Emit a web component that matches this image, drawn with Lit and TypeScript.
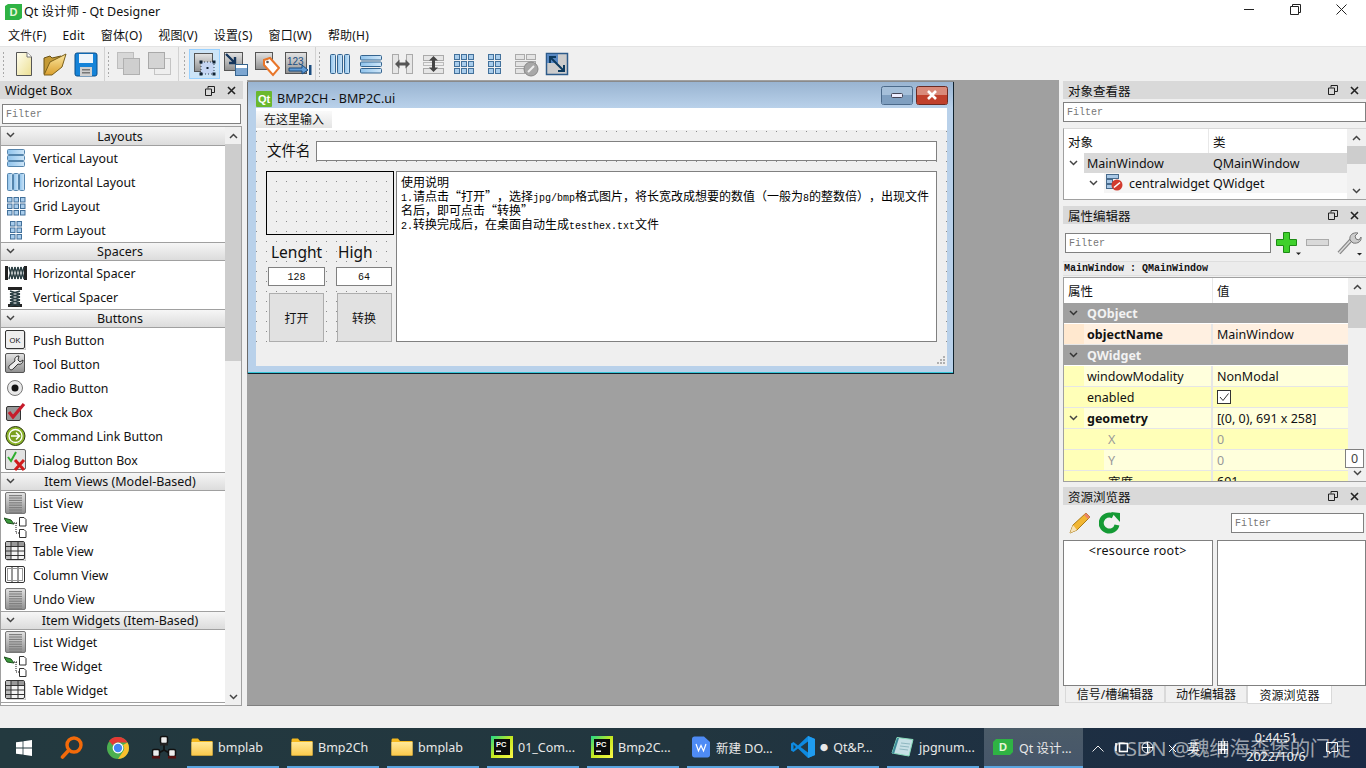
import { LitElement, html, css, svg } from "lit";
import { customElement } from "lit/decorators.js";

const bevel = (x: number, y: number, w: number, h: number, fill = "url(#gBevel)", stroke = "#666") =>
  svg`<rect x=${x + 0.5} y=${y + 0.5} width=${w - 1} height=${h - 1} rx="1.5" fill=${fill} stroke=${stroke}/>`;
const ic = (w: number, h: number, body: unknown) =>
  html`<svg width=${w} height=${h} viewBox="0 0 ${w} ${h}">${body}</svg>`;

const gridCells = (cols: number, rows: number, x0: number, y0: number, p: number, s: number) => {
  const out: unknown[] = [];
  for (let c = 0; c < cols; c++)
    for (let r = 0; r < rows; r++)
      out.push(svg`<rect x=${x0 + c * p + 0.5} y=${y0 + r * p + 0.5} width=${s} height=${s} fill="#a9cdec" stroke="#43719b"/>`);
  return out;
};
const spring = (vertical: boolean) => {
  const parts: unknown[] = [];
  for (let i = 0; i < 5; i++)
    parts.push(
      vertical
        ? svg`<path d="M5 ${5 + i * 3}L15 ${8 + i * 3}M15 ${5 + i * 3}L5 ${8 + i * 3}" stroke="#2b3f44" stroke-width="1.4"/>`
        : svg`<path d="M${4 + i * 3} 5L${7 + i * 3} 17M${7 + i * 3} 5L${4 + i * 3} 17" stroke="#2b3f44" stroke-width="1.4"/>`
    );
  return ic(
    22,
    22,
    vertical
      ? svg`<rect x="3" y="1" width="14" height="3" fill="#222"/><rect x="3" y="18" width="14" height="3" fill="#222"/>${parts}`
      : svg`<rect x="0" y="4" width="3" height="14" fill="#222"/><rect x="19" y="4" width="3" height="14" fill="#222"/>${parts}`
  );
};
const lines = () => {
  const l: unknown[] = [];
  for (let i = 0; i < 8; i++) l.push(svg`<rect x="4" y=${3 + i * 2.4} width="13" height="1.2" fill="#808080"/>`);
  return ic(21, 22, svg`${bevel(0, 0, 21, 22, "url(#gBevel)", "#777")}${l}`);
};
const tree = () =>
  ic(23, 22, svg`<path d="M0 2L7 4L10 8L3 7Z" fill="#3b9a3b" stroke="#1f4f1f"/>
    <path d="M10 7H14M12 7V17H15" stroke="#111" stroke-dasharray="1 1" fill="none"/>
    <path d="M15.5 1.5H20L22 3.5V10H15.5Z" fill="#fff" stroke="#333"/><path d="M15.5 13.5H20L22 15.5V21.5H15.5Z" fill="#fff" stroke="#333"/>`);
const table = () =>
  ic(21, 20, svg`<rect x=".5" y=".5" width="19" height="18" rx="1.5" fill="#f4f4f4" stroke="#333"/><rect x="1" y="1" width="18" height="4" fill="#999"/><rect x="1" y="1" width="5" height="17" fill="#bbb"/>
    <path d="M.5 5.5H19.5M.5 10H19.5M.5 14.5H19.5M6 1V18M13 1V18" stroke="#333"/><path d="M2 20H21V3" stroke="#aaa" fill="none"/>`);

const wIcons: Record<string, () => unknown> = {
  Vertical: () => ic(20, 20, svg`${[0, 1, 2].map((i) => svg`<rect x="1.5" y=${1.5 + i * 6} width="17" height="5" rx="1" fill="url(#gBlue)" stroke="#5585ad"/>`)}`),
  Horizontal: () => ic(20, 20, svg`${[0, 1, 2].map((i) => svg`<rect x=${1.5 + i * 6} y="1.5" width="5" height="17" rx="1" fill="url(#gBlue)" stroke="#5585ad"/>`)}`),
  Grid: () => ic(20, 20, svg`${gridCells(3, 3, 1, 1, 6.5, 4.5)}`),
  Form: () => ic(20, 20, svg`${gridCells(2, 3, 4, 1, 6.5, 4.5)}`),
  HS: () => spring(false),
  VS: () => spring(true),
  Push: () => ic(21, 20, svg`${bevel(0, 0, 20, 19, "#eee", "#333")}<path d="M2 20H21V2" stroke="#aaa" fill="none"/><text x="10" y="12.5" text-anchor="middle" font-size="7.5" font-family="Liberation Sans" fill="#111">OK</text>`),
  Tool: () => ic(21, 22, svg`${bevel(0, 0, 20, 20, "url(#gBevel)", "#555")}<path d="M14 3C11 3 9 5 10 8L4 13C3 16 6 18 8 16L13 11C16 12 18 10 18 7L15 9L13 7Z" fill="#eee" stroke="#333"/>`),
  Radio: () => ic(21, 20, svg`<circle cx="10" cy="10" r="7.5" fill="#e8e8e8" stroke="#777"/><circle cx="10" cy="10" r="3.5" fill="#111"/>`),
  Check: () => ic(21, 20, svg`${bevel(1, 4, 15, 15, "#999", "#333")}<path d="M4 10L8 15L19 2" stroke="#c61c2b" stroke-width="3.2" fill="none"/>`),
  Command: () => ic(21, 22, svg`<circle cx="10.5" cy="11" r="9.5" fill="#8cb52b" stroke="#2d3a10"/><circle cx="10.5" cy="11" r="6.5" fill="#7ba01e" stroke="#fff" stroke-width="1.3"/><path d="M6 11H14M11 7.5L14.5 11L11 14.5" stroke="#fff" stroke-width="1.6" fill="none"/>`),
  Dialog: () => ic(22, 22, svg`${bevel(0, 0, 21, 21, "#e2e2e2", "#666")}<path d="M3 8L6 12L11 3" stroke="#2fae2f" stroke-width="2" fill="none"/><path d="M10 11L19 21M19 11L10 21" stroke="#d01c1c" stroke-width="3"/>`),
  List: lines,
  Tree: tree,
  Table: table,
  Column: () => ic(21, 20, svg`<rect x=".5" y="1.5" width="19" height="16" rx="1.5" fill="#fff" stroke="#333"/><path d="M7 2V17M13 2V17" stroke="#333"/><rect x="2.5" y="3.5" width="15" height="12" fill="none" stroke="#999"/>`),
};

const groups: [string, [string, string][]][] = [
  ["Layouts", [["Vertical Layout", "Vertical"], ["Horizontal Layout", "Horizontal"], ["Grid Layout", "Grid"], ["Form Layout", "Form"]]],
  ["Spacers", [["Horizontal Spacer", "HS"], ["Vertical Spacer", "VS"]]],
  ["Buttons", [["Push Button", "Push"], ["Tool Button", "Tool"], ["Radio Button", "Radio"], ["Check Box", "Check"], ["Command Link Button", "Command"], ["Dialog Button Box", "Dialog"]]],
  ["Item Views (Model-Based)", [["List View", "List"], ["Tree View", "Tree"], ["Table View", "Table"], ["Column View", "Column"], ["Undo View", "List"]]],
  ["Item Widgets (Item-Based)", [["List Widget", "List"], ["Tree Widget", "Tree"], ["Table Widget", "Table"]]],
];

const chev = (col = "#444") => html`<svg width="9" height="6" viewBox="0 0 9 6"><path d="M1 1L4.5 4.5L8 1" fill="none" stroke=${col} stroke-width="1.5"/></svg>`;
const chevUp = html`<svg width="9" height="6" viewBox="0 0 9 6"><path d="M1 5L4.5 1.5L8 5" fill="none" stroke="#444" stroke-width="1.5"/></svg>`;

const dockBtns = html`<span class="dockbtns">
  <svg width="10" height="10" viewBox="0 0 10 10"><path d="M3 2.5V.5H9.5V6.5H7M.5 3H6.5V9.5H.5Z" fill="none" stroke="#222"/></svg>
  <svg width="9" height="9" viewBox="0 0 9 9"><path d="M1 1L8 8M8 1L1 8" stroke="#222" stroke-width="1.6"/></svg>
</span>`;
const dockTitle = (t: string) => html`<div class="docktitle"><span>${t}</span>${dockBtns}</div>`;
const filter = () => html`<div class="filter"><span class="latin">Filter</span></div>`;

const handle = html`<span class="handle"></span>`;

const toolbar = {
  newDoc: ic(22, 26, svg`<path d="M3.5 1.5H14L18.5 6V24.5H3.5Z" fill="url(#gPaper)" stroke="#555"/><path d="M14 1.5V6H18.5" fill="#fff" stroke="#777"/>`),
  open: ic(26, 26, svg`<path d="M2 23L2 7L8 5L10 7L19 5V10" fill="#c49a35" stroke="#6a5215"/><path d="M2 24L8 11L24 3L20 16L10 24Z" fill="url(#gFolder)" stroke="#7a5f1a"/>`),
  save: ic(24, 26, svg`<rect x="1" y="2" width="22" height="23" rx="2" fill="#1583d8" stroke="#0b4f8a"/><rect x="5" y="3" width="14" height="9" fill="#eef5fb"/><rect x="6" y="16" width="12" height="9" fill="#cfcfcf"/><rect x="8" y="18" width="8" height="1.5" fill="#777"/><rect x="8" y="21" width="8" height="1.5" fill="#777"/>`),
  dis1: ic(26, 26, svg`<rect x="1.5" y="1.5" width="16" height="16" fill="#d7d7d7" stroke="#bdbdbd"/><rect x="7.5" y="7.5" width="16" height="16" fill="#cfcfcf" stroke="#b0b0b0"/>`),
  dis2: ic(26, 26, svg`<rect x="7.5" y="7.5" width="16" height="16" fill="#eee" stroke="#c4c4c4"/><rect x="1.5" y="1.5" width="16" height="16" fill="#d4d4d4" stroke="#a9a9a9"/>`),
  edit: ic(26, 26, svg`<rect x="2.5" y="2.5" width="18" height="18" fill="url(#gBevel)" stroke="#555"/><rect x="9" y="11" width="13" height="12" fill="#c5d6f3"/><path d="M9 11H22V23H9Z" fill="none" stroke="#345" stroke-dasharray="1 2"/><rect x="7.5" y="9.5" width="3" height="3" fill="#123"/><rect x="20.5" y="9.5" width="3" height="3" fill="#123"/><rect x="7.5" y="21.5" width="3" height="3" fill="#123"/><rect x="20.5" y="21.5" width="3" height="3" fill="#123"/><rect x="14.5" y="16" width="2" height="2" fill="#123"/>`),
  sig: ic(26, 26, svg`<rect x="1.5" y="1.5" width="18" height="18" fill="url(#gBevel)" stroke="#555"/><rect x="12.5" y="13.5" width="12" height="11" fill="#fff" stroke="#35648f"/><rect x="13" y="17" width="11" height="7" fill="#7ca6d1"/><path d="M3 3L12 12M12 6V12H6" stroke="#16365c" stroke-width="2.4" fill="none"/>`),
  buddy: ic(26, 26, svg`<rect x="1.5" y="1.5" width="17" height="17" fill="url(#gBevel)" stroke="#555"/><path d="M10 9L16 7L25 17L19 24L10 14Z" fill="#fff" stroke="#e8762a" stroke-width="2"/><circle cx="13.5" cy="11" r="1.3" fill="#555"/>`),
  tab: ic(28, 26, svg`<rect x="1.5" y="1.5" width="21" height="21" fill="url(#gBevel)" stroke="#555"/><text x="3" y="14" font-size="10" font-family="Liberation Sans" fill="#1b4d80">123</text><path d="M5 17H18V14L24 19L18 23V20H5Z" fill="#5f9bd6" stroke="#1b4d80"/><rect x="25" y="14" width="2.5" height="10" fill="#1b4d80"/>`),
  hbox: ic(22, 24, svg`${[0, 1, 2].map((i) => svg`<rect x=${1.5 + i * 7} y="2.5" width="5" height="19" rx="1" fill="url(#gBlue)" stroke="#35648f"/>`)}`),
  vbox: ic(24, 24, svg`${[0, 1, 2].map((i) => svg`<rect x="1.5" y=${3.5 + i * 6.5} width="21" height="4.5" rx="1" fill="url(#gBlue)" stroke="#35648f"/>`)}`),
  hsplit: ic(24, 24, svg`<rect x="2.5" y="2.5" width="6" height="19" fill="#e6e6e6" stroke="#aaa"/><rect x="16.5" y="2.5" width="6" height="19" fill="#e6e6e6" stroke="#aaa"/><path d="M5 12L9.5 7.5V10.5H15.5V7.5L20 12L15.5 16.5V13.5H9.5V16.5Z" fill="#555"/>`),
  vsplit: ic(24, 24, svg`<rect x="2.5" y="3.5" width="20" height="5" fill="#e6e6e6" stroke="#aaa"/><rect x="2.5" y="16.5" width="20" height="5" fill="#e6e6e6" stroke="#aaa"/><rect x="2.5" y="10.5" width="20" height="3" fill="#eee" stroke="#bbb"/><path d="M12.5 4L17 8.5H14V15.5H17L12.5 20L8 15.5H11V8.5H8Z" fill="#444"/>`),
  grid: ic(24, 24, svg`${gridCells(3, 3, 2, 2, 7, 5)}`),
  form: ic(24, 24, svg`${gridCells(2, 3, 5, 2, 7, 5)}`),
  brk: ic(26, 26, svg`<rect x="2.5" y="3.5" width="9" height="5" fill="#e4e4e4" stroke="#aaa"/><rect x="13.5" y="3.5" width="9" height="5" fill="#e4e4e4" stroke="#aaa"/><rect x="2.5" y="10.5" width="20" height="5" fill="#e4e4e4" stroke="#aaa"/><rect x="2.5" y="17.5" width="9" height="5" fill="#e4e4e4" stroke="#aaa"/><circle cx="18" cy="18" r="7" fill="#a8a8a8" stroke="#888"/><path d="M15 21L21 15" stroke="#eee" stroke-width="2"/>`),
  adjust: ic(24, 24, svg`<rect x="1.5" y="1.5" width="21" height="21" fill="#ccc" stroke="#2d5b8a" stroke-width="1.5"/><rect x="2" y="2" width="11" height="9" fill="#5888c2"/><path d="M5 5L19 19M5 11V5H11M13 19H19V13" stroke="#0d3a5e" stroke-width="2" fill="none"/>`),
};

const folder = ic(22, 18, svg`<path d="M.5 2.5C.5 1 1 .5 2 .5H7L9 3H21.5V17.5H.5Z" fill="#f5b91e"/><rect x=".5" y="4" width="21" height="13.5" fill="url(#gTaskFolder)"/>`);
const pc = ic(22, 22, svg`<rect x="0" y="0" width="22" height="22" fill="url(#gPc)"/><rect x="3" y="3" width="16" height="16" fill="#0b0b0b"/><text x="5" y="10.5" font-size="7.5" font-weight="700" font-family="Liberation Sans" fill="#fff">PC</text><rect x="5" y="14.5" width="5" height="1.5" fill="#eee"/>`);
const task: [unknown, unknown][] = [
  [folder, "bmplab"],
  [folder, "Bmp2Ch"],
  [folder, "bmplab"],
  [pc, "01_Com..."],
  [pc, "Bmp2C..."],
  [ic(20, 22, svg`<path d="M1 3C1 1.5 2 .5 3.5 .5H13L19 6V19C19 20.5 18 21.5 16.5 21.5H3.5C2 21.5 1 20.5 1 19Z" fill="#4e8bf5"/><path d="M5 8L7.5 15L10 9.5L12.5 15L15 8" stroke="#fff" stroke-width="1.2" fill="none"/>`), "新建 DO..."],
  [ic(24, 24, svg`<path d="M17 1L24 4V20L17 23L7 13.5L2.5 17L0 15.5V8.5L2.5 7L7 10.5Z" fill="#0e8ae0"/><path d="M17 6.5V17.5L9.5 12Z" fill="#233a44"/><path d="M2.5 9.5L5 12L2.5 14.5Z" fill="#233a44"/><path d="M17 1L24 4V20L17 23Z" fill="#1f9cf0"/>`), html`<i class="dot">●</i> Qt&amp;P...`],
  [ic(23, 22, svg`<path d="M6 1.5L22 3.5L18 20L1 17Z" fill="#c6dfe5" stroke="#8db"/><path d="M1 17L6 2L8 2L3 18Z" fill="#3d8a98"/><path d="M10 7L19 8M9 10L18 11M8.5 13L17 14" stroke="#8fb7c0"/>`), "jpgnum..."],
];

@customElement("app-root")
export class AppRoot extends LitElement {
  static styles = css`
    :host { display: block; width: 1366px; height: 768px; overflow: hidden; position: relative; background: #f0f0f0;
      font: 12.5px "Noto Sans", "Noto Sans CJK SC", sans-serif; color: #111; }
    .defs { position: absolute; width: 0; height: 0; }
    svg { display: block; flex: none; }
    .page { display: flex; flex-direction: column; height: 768px; }
    .titlebar { height: 24px; background: #fff; display: flex; align-items: center; padding: 0 2px 0 5px; gap: 2px; flex: none; box-sizing: border-box; }
    .titlebar .t { font-size: 12.5px; margin-top: -3px; }
    .winbtns { margin-left: auto; display: flex; }
    .winbtns span { width: 46px; height: 24px; display: flex; align-items: center; justify-content: center; padding-bottom: 6px; box-sizing: border-box; }
    .menubar { height: 22px; background: #fff; display: flex; align-items: center; padding-left: 8px; gap: 16px; flex: none; font-size: 12px; letter-spacing: .2px; }
    .toolbar { height: 34px; background: #f0f0f0; display: flex; align-items: center; flex: none; border-top: 1px solid #e4e4e4; padding-left: 2px; box-sizing: border-box; }
    .handle { width: 3px; height: 26px; margin-right: 3px; flex: none; background: radial-gradient(circle at center, #a8a8a8 0 1px, transparent 1.1px) 0 0 / 3px 4px; }
    .tb { width: 31px; height: 30px; display: flex; align-items: center; justify-content: center; flex: none; box-sizing: border-box; }
    .tb.on { background: #cce4f7; border: 1px solid #99d1ff; }
    .tbsep { width: 1px; height: 34px; background: #d2d2d2; margin: 0 2px 0 3px; flex: none; }
    .tbsep.wide { margin-right: 4px; }
    .tbsep.tight { margin-left: 2px; }
    .main { flex: none; display: grid; grid-template-columns: 243px 1fr 303px; column-gap: 4px; height: 626px; min-height: 0; }
    .dock { display: flex; flex-direction: column; min-width: 0; }
    .docktitle { height: 18px; margin-top: 1px; background: #d9d9d9; display: flex; align-items: center; justify-content: space-between; padding: 0 0 0 5px; flex: none; font-size: 12.5px; box-sizing: border-box; }
    .ldock .docktitle { padding-top: 1px; }
    .dockbtns { display: flex; gap: 12px; align-items: center; padding-right: 7px; }
    .filter { height: 20px; box-sizing: border-box; background: #fff; border: 1px solid #808080; margin: 5px 2px 0; display: flex; align-items: center; padding: 2px 0 0 3px; flex: none; color: #777; }
    .latin { font: 10px/12px "Liberation Mono", "Noto Sans CJK SC", monospace; }
    .wbox { margin: 2px 1px 0 0; height: 580px; box-sizing: border-box; border: 1px solid #a0a0a0; display: flex; background: #fff; overflow: hidden; flex: none; }
    .wlist { flex: 1; min-width: 0; align-self: flex-start; border-bottom: 1px solid #a0a0a0; font-size: 12.3px; }
    .ghead { height: 19px; box-sizing: border-box; background: linear-gradient(#f6f6f6, #dcdcdc); border-bottom: 1px solid #a0a0a0; border-top: 1px solid #a0a0a0; display: flex; align-items: center; justify-content: center; padding-left: 14px; position: relative; font-size: 12.5px; }
    .ghead:first-child { border-top: 0; }
    .ghead .gc { position: absolute; left: 5px; top: 5px; }
    .wit { height: 24px; display: flex; align-items: center; padding-left: 4px; gap: 7px; }
    .wit .slot { width: 21px; display: flex; justify-content: center; flex: none; }
    .wit span.l { white-space: nowrap; }
    .scr { width: 16px; flex: none; background: #f0f0f0; display: flex; flex-direction: column; align-items: center; }
    .scr.w19 { width: 19px; }
    .scr.w18 { width: 18px; }
    .scr .ar { height: 17px; display: flex; align-items: center; justify-content: center; flex: none; }
    .scr .th { width: 100%; background: #cdcdcd; flex: none; }
    .scr .th.h217 { height: 217px; }
    .scr .th.h18 { height: 18px; }
    .scr .th.h33 { height: 33px; }
    .scr .sp { flex: 1; }
    .mdi { background: #a0a0a0; position: relative; border-bottom: 1px solid #808080; }
    .win { position: absolute; left: 1px; top: 2px; width: 706px; height: 292px; box-sizing: border-box; border: 1px solid #10222e; border-width: 0 1px 1px 0; box-shadow: 0 -1px 0 #8a8a8a, -1px 0 0 #6a6a6a, inset 0 -1px 0 #35c6d8;
      background: linear-gradient(#99b4d1 0, #b9d1ea 26px); display: flex; flex-direction: column; padding: 0 6px 7px 8px; }
    .wt { height: 26px; display: flex; align-items: flex-end; gap: 5px; flex: none; font-size: 12.5px; padding-bottom: 1px; box-sizing: border-box; }
    .ctrl { margin-left: auto; display: flex; gap: 3px; margin-bottom: 2px; margin-right: -1px; }
    .qtic { width: 16px; height: 16px; background: #6ab82e; color: #fff; font: 700 11px/16px "Liberation Sans", sans-serif; text-align: center; border-radius: 1px; }
    .wtt { line-height: 16px; }
    .client { flex: 1; display: flex; flex-direction: column; background: #efefef; min-height: 0; position: relative; }
    .fmenu { height: 22px; background: #fff; display: flex; align-items: flex-start; flex: none; }
    .fmenu span { margin-top: 3px; height: 17px; width: 76px; background: linear-gradient(#fafafa, #e4e4e4); text-align: center; font-size: 12px; line-height: 17px; }
    .form { flex: none; height: 215px; box-sizing: border-box; padding: 11px 10px 0; display: flex; flex-direction: column; gap: 10px;
      background: radial-gradient(circle at .5px 1.5px, #8c8c8c .62px, transparent .72px) 0 0 / 10px 10px; }
    .frow { display: flex; align-items: center; gap: 5px; height: 20px; flex: none; }
    .flabel { font-size: 14.5px; width: 45px; white-space: nowrap; margin: -3px -1px 0 1px; }
    .ledit { flex: 1; height: 20px; box-sizing: border-box; background: #fff; border: 1px solid #808080; }
    .bodyrow { display: flex; gap: 2px; height: 171px; flex: none; }
    .lcol { width: 128px; display: flex; flex-direction: column; flex: none; }
    .picture { height: 64px; box-sizing: border-box; border: 1px solid #000; flex: none; }
    .sizes { display: grid; grid-template-columns: 57px 56px; column-gap: 11px; margin: 6px 0 0 2px; justify-items: center; }
    .sz { font-size: 15.5px; line-height: 23px; height: 26px; justify-self: start; }
    .sz.s1 { margin-left: 3px; }
    .sz.s2 { margin-left: 2px; }
    .num { width: 100%; height: 19px; box-sizing: border-box; background: #fff; border: 1px solid #808080; text-align: center; font: 10px/19px "Liberation Mono", monospace; }
    .push { width: 55px; height: 49px; margin-top: 7px; box-sizing: border-box; background: #e1e1e1; border: 1px solid #adadad; display: flex; align-items: center; justify-content: center; font-size: 12px; }
    .text { flex: 1; background: #fff; border: 1px solid #808080; padding: 3px 4px; font: 12px/14px "Noto Sans CJK SC", sans-serif; color: #000; box-sizing: border-box; min-width: 0; text-spacing-trim: space-all; font-kerning: none; overflow: hidden; }
    .text div { height: 14px; white-space: nowrap; }
    .text .latin { font: 10px/14px "Liberation Mono", monospace; }
    .grip { position: absolute; right: 2px; bottom: 2px; }
    .rdock .filter { margin: 3px 0 0 0; }
    .otree { margin-top: 6px; height: 72px; box-sizing: border-box; flex: none; border-bottom: 1px solid #a0a0a0; border-top: 1px solid #d8d8d8; border-left: 1px solid #a0a0a0; display: flex; overflow: hidden; background: #fff; }
    .cols { flex: 1; min-width: 0; }
    .hd { display: grid; grid-template-columns: 145px 1fr; height: 24px; align-items: center; font-size: 12.5px; }
    .hd span { padding-left: 4px; height: 100%; display: flex; align-items: center; border-right: 1px solid #e8e8e8; }
    .hd span.last { border: 0; }
    .otr { display: grid; grid-template-columns: 145px 1fr; height: 20px; align-items: center; }
    .otr > * { white-space: nowrap; }
    .otr .name { display: flex; align-items: center; height: 100%; position: relative; }
    .otr .n1 { padding-left: 23px; }
    .otr .n2 { padding-left: 65px; }
    .otr .cls { padding-left: 4px; }
    .sel { background: linear-gradient(90deg, #fff 0 20px, #d9d9d9 20px); }
    .sel2 { background: linear-gradient(90deg, #fff 0 40px, #f5f5f5 40px); }
    .otr .ch { position: absolute; top: 7px; }
    .otr .ch.c1p { left: 5px; }
    .otr .ch.c2p { left: 25px; }
    .otr .nicon { position: absolute; left: 42px; top: 1px; }
    .pe-title { margin-top: 5px; flex: none; }
    .petools { height: 30px; display: flex; align-items: center; margin-top: 4px; flex: none; padding-left: 2px; }
    .petools .fi { width: 206px; height: 20px; box-sizing: border-box; background: #fff; border: 1px solid #808080; display: flex; align-items: center; padding: 2px 0 0 3px; color: #777; }
    .mplus { margin-left: 4px; }
    .mminus { margin-left: 5px; }
    .mwrench { margin-left: 7px; }
    .peclass { height: 15px; background: #ececec; border: 1px solid #dedede; border-width: 1px 0; margin-top: 3px; flex: none; display: flex; align-items: center; color: #111; padding: 1px 0 0 1px; box-sizing: border-box; }
    .peclass .latin { font-weight: 700; font-size: 10px; }
    .ptable { margin-top: 1px; height: 205px; display: flex; flex: none; box-sizing: border-box; border: 1px solid #a0a0a0; border-right: 0; overflow: hidden; background: #fff; }
    .pr { display: grid; grid-template-columns: 149px 1fr; height: 21px; box-sizing: border-box; border-bottom: 1px solid #e6e6e6; align-items: center; position: relative; white-space: nowrap; }
    .pr.hdr { height: 25px; border: 0; background: #fff; }
    .c1 { height: 100%; display: flex; align-items: center; padding-left: 23px; border-right: 2px solid #e6e6e6; box-sizing: border-box; position: relative; }
    .pr.hdr .c1 { padding-left: 4px; border-right: 1px solid #e8e8e8; }
    .c2 { padding-left: 4px; }
    .grp { background: #a0a0a0; color: #f2f2f2; font-weight: 700; border-bottom: 1px solid #fff; }
    .grp .c1 { border-right: 0; }
    .onm { background: linear-gradient(90deg, #ffe8cf 0 20px, #fff0e1 20px); }
    .y1 { background: linear-gradient(90deg, #ffffb8 0 20px, #ffffdc 20px); }
    .y2 { background: #ffffb8; }
    .y3 { background: linear-gradient(90deg, #ffffb8 0 40px, #ffffdc 40px); }
    .bold { font-weight: 700; }
    .dim { color: #999; }
    .c1.ind { padding-left: 44px; }
    .pr .ch { position: absolute; left: 5px; top: 7px; }
    .chk { width: 12px; height: 12px; border: 1px solid #333; background: #fff; display: flex; align-items: center; justify-content: center; }
    .tip { position: absolute; left: 1345px; top: 449px; width: 19px; height: 19px; box-sizing: border-box; background: #fff; border: 1px solid #808080; text-align: center; font-size: 12.5px; line-height: 17px; color: #444; }
    .res-title { margin-top: 4px; flex: none; }
    .rtools { height: 35px; display: flex; align-items: center; flex: none; padding-left: 5px; gap: 7px; }
    .rtools .fi { margin: 1px 2px 0 auto; width: 133px; height: 20px; box-sizing: border-box; background: #fff; border: 1px solid #808080; display: flex; align-items: center; padding: 2px 0 0 3px; color: #777; }
    .lists { display: flex; gap: 4px; height: 146px; flex: none; }
    .lists div { flex: 1; background: #fff; border: 1px solid #808080; text-align: center; box-sizing: border-box; font-size: 12.5px; padding-top: 2px; line-height: 16px; letter-spacing: .3px; }
    .tabs { display: flex; padding-left: 2px; flex: none; height: 18px; font-size: 12px; }
    .tab { background: #f0f0f0; border: 1px solid #d9d9d9; border-top: 0; display: flex; align-items: center; justify-content: center; height: 17px; box-sizing: border-box; flex: none; }
    .tab.s { width: 100px; }
    .tab.a { width: 82px; }
    .tab.on { background: #fff; height: 18px; width: 85px; }
    .strip { height: 22px; flex: none; }
    .taskbar { height: 40px; flex: none; display: flex; align-items: center; background: linear-gradient(90deg, #23393f 0, #22363f 50%, #1a2a45 100%); color: #e8e8e8; font-size: 12.5px; position: relative; }
    .sl { display: flex; align-items: center; justify-content: center; flex: none; height: 40px; }
    .sl.s48 { width: 48px; }
    .sl.s44 { width: 44px; }
    .sl.s47 { width: 47px; }
    .ti { width: 92px; height: 40px; margin-right: 8px; box-sizing: border-box; border-bottom: 2px solid #5aa5e0; display: flex; align-items: center; padding-left: 4px; gap: 5px; flex: none; white-space: nowrap; }
    .ti.act { width: 99px; background: linear-gradient(#4b5b68, #46566a); margin-left: -3px; margin-right: 0; gap: 6px; padding-left: 9px; }
    .dot { font-style: normal; font-size: 8px; vertical-align: 1px; margin-right: 2px; }
    .tray { display: flex; align-items: center; flex: 1; height: 40px; position: relative; }
    .tray svg { position: absolute; }
    .tv { left: 9px; top: 17px; }
    .t1 { left: 32px; top: 14px; }
    .t2 { left: 58px; top: 13px; }
    .t3 { left: 85px; top: 16px; }
    .t4 { left: 135px; top: 13px; }
    .t5 { left: 243px; top: 14px; }
    .ime { position: absolute; left: 104px; top: 10px; font-size: 13px; line-height: 20px; }
    .clock { position: absolute; left: 158px; top: 0; width: 70px; text-align: center; color: #eee; line-height: 19px; font-size: 12.5px; white-space: nowrap; }
    .mark { position: absolute; right: 16px; top: 6px; font: 20.5px/28px "Noto Sans", "Noto Sans CJK SC", sans-serif; color: rgba(255, 255, 255, .58); white-space: nowrap; letter-spacing: -.4px; }
  `;

  private tb(icon: unknown, on = false) {
    return html`<span class="tb ${on ? "on" : ""}">${icon}</span>`;
  }

  render() {
    return html`
      <svg class="defs" aria-hidden="true"><defs>
        <linearGradient id="gBevel" x1="0" y1="0" x2="0" y2="1"><stop offset="0" stop-color="#e4e4e4"/><stop offset="1" stop-color="#8f8f8f"/></linearGradient>
        <linearGradient id="gBlue" x1="0" y1="0" x2="1" y2="0"><stop offset="0" stop-color="#8fc3ec"/><stop offset="1" stop-color="#cfe6f8"/></linearGradient>
        <linearGradient id="gPaper" x1="0" y1="0" x2="1" y2="1"><stop offset="0" stop-color="#fffef0"/><stop offset="1" stop-color="#ecdf92"/></linearGradient>
        <linearGradient id="gFolder" x1="0" y1="0" x2="0" y2="1"><stop offset="0" stop-color="#fbe7a0"/><stop offset="1" stop-color="#dba02e"/></linearGradient>
        <linearGradient id="gTaskFolder" x1="0" y1="0" x2="0" y2="1"><stop offset="0" stop-color="#ffe99a"/><stop offset="1" stop-color="#fbc94a"/></linearGradient>
        <linearGradient id="gPc" x1="0" y1="0" x2="1" y2="1"><stop offset="0" stop-color="#21d789"/><stop offset=".5" stop-color="#c6e81f"/><stop offset="1" stop-color="#fcf84a"/></linearGradient>
      </defs></svg>
      <div class="page">
        <div class="titlebar">
          <svg width="17" height="16" viewBox="0 0 17 16"><path d="M0 2L3 0H17V14L14 16H0Z" fill="#2fb344"/><text x="8.5" y="12" text-anchor="middle" font-size="11" font-weight="700" font-family="Liberation Sans" fill="#e8f7d8">D</text></svg>
          <span class="t">Qt 设计师 - Qt Designer</span>
          <span class="winbtns">
            <span><svg width="11" height="11" viewBox="0 0 11 11"><path d="M0 5.5H10" stroke="#222"/></svg></span>
            <span><svg width="11" height="11" viewBox="0 0 11 11"><path d="M2.5 2.5V.5H10.5V8.5H8.5M.5 2.5H8.5V10.5H.5Z" fill="none" stroke="#222"/></svg></span>
            <span><svg width="11" height="11" viewBox="0 0 11 11"><path d="M.5 .5L10.5 10.5M10.5 .5L.5 10.5" stroke="#222"/></svg></span>
          </span>
        </div>
        <div class="menubar">
          ${["文件(F)", "Edit", "窗体(O)", "视图(V)", "设置(S)", "窗口(W)", "帮助(H)"].map((m) => html`<span>${m}</span>`)}
        </div>
        <div class="toolbar">
          ${handle}${this.tb(toolbar.newDoc)}${this.tb(toolbar.open)}${this.tb(toolbar.save)}
          <span class="tbsep"></span>${handle}${this.tb(toolbar.dis1)}${this.tb(toolbar.dis2)}
          <span class="tbsep wide"></span>${handle}${this.tb(toolbar.edit, true)}${this.tb(toolbar.sig)}${this.tb(toolbar.buddy)}${this.tb(toolbar.tab)}
          <span class="tbsep tight"></span>${handle}${this.tb(toolbar.hbox)}${this.tb(toolbar.vbox)}${this.tb(toolbar.hsplit)}${this.tb(toolbar.vsplit)}${this.tb(toolbar.grid)}${this.tb(toolbar.form)}${this.tb(toolbar.brk)}${this.tb(toolbar.adjust)}
        </div>
        <div class="main">
          <div class="dock ldock">
            ${dockTitle("Widget Box")}
            ${filter()}
            <div class="wbox">
              <div class="wlist">
                ${groups.map(([g, items]) => html`
                  <div class="ghead"><span class="gc">${chev()}</span><span>${g}</span></div>
                  ${items.map(([t, k]) => html`<div class="wit"><span class="slot">${wIcons[k]()}</span><span class="l">${t}</span></div>`)}
                `)}
              </div>
              <div class="scr">
                <div class="ar">${chevUp}</div>
                <div class="th h217"></div>
                <div class="sp"></div>
                <div class="ar">${chev()}</div>
              </div>
            </div>
          </div>
          <div class="mdi">
            <div class="win">
              <div class="wt">
                <span class="qtic">Qt</span><span class="wtt">BMP2CH - BMP2C.ui</span>
                <span class="ctrl">
                  <svg width="32" height="19" viewBox="0 0 32 19"><rect x=".5" y=".5" width="31" height="18" rx="2" fill="#a5bfd9" stroke="#4c6a8a"/><rect x="1" y="9" width="30" height="9" fill="#7f9fc0"/><rect x="10.5" y="7.5" width="11" height="4" rx="1" fill="#eef" stroke="#445"/></svg>
                  <svg width="32" height="19" viewBox="0 0 32 19"><rect x=".5" y=".5" width="31" height="18" rx="2" fill="#d98a7a" stroke="#6b2a22"/><rect x="1" y="9" width="30" height="9" fill="#c0402c"/><path d="M12 5L20 13M20 5L12 13" stroke="#fff" stroke-width="2.6"/></svg>
                </span>
              </div>
              <div class="client">
                <div class="fmenu"><span>在这里输入</span></div>
                <div class="form">
                  <div class="frow"><span class="flabel">文件名</span><div class="ledit"></div></div>
                  <div class="bodyrow">
                    <div class="lcol">
                      <div class="picture"></div>
                      <div class="sizes">
                        <span class="sz s1">Lenght</span><span class="sz s2">High</span>
                        <div class="num">128</div><div class="num">64</div>
                        <div class="push">打开</div><div class="push">转换</div>
                      </div>
                    </div>
                    <div class="text">
                      <div>使用说明</div>
                      <div><span class="latin">1.</span>请点击“打开”，选择<span class="latin">jpg/bmp</span>格式图片，将长宽改成想要的数值（一般为<span class="latin">8</span>的整数倍），出现文件</div>
                      <div>名后，即可点击“转换”</div>
                      <div><span class="latin">2.</span>转换完成后，在桌面自动生成<span class="latin">testhex.txt</span>文件</div>
                    </div>
                  </div>
                </div>
                <svg class="grip" width="9" height="9" viewBox="0 0 9 9"><path d="M7 1h2v2H7zM4 4h2v2H4zM7 4h2v2H7zM1 7h2v2H1zM4 7h2v2H4zM7 7h2v2H7z" fill="#b0b0b0"/></svg>
              </div>
            </div>
          </div>
          <div class="dock rdock">
            ${dockTitle("对象查看器")}
            ${filter()}
            <div class="otree">
              <div class="cols">
                <div class="hd"><span>对象</span><span class="last">类</span></div>
                <div class="otr sel"><span class="name n1"><span class="ch c1p">${chev()}</span>MainWindow</span><span class="cls">QMainWindow</span></div>
                <div class="otr sel2"><span class="name n2"><span class="ch c2p">${chev()}</span><svg class="nicon" width="17" height="17" viewBox="0 0 17 17"><rect x=".5" y=".5" width="12" height="4" fill="#a9c8e6" stroke="#476a8c"/><rect x=".5" y="5.5" width="6" height="4" fill="#a9c8e6" stroke="#476a8c"/><rect x=".5" y="10.5" width="6" height="4" fill="#a9c8e6" stroke="#476a8c"/><circle cx="11" cy="11" r="5.5" fill="#d23a2e"/><path d="M8 13.5L14 8.5" stroke="#fff" stroke-width="1.6"/></svg>centralwidget</span><span class="cls">QWidget</span></div>
              </div>
              <div class="scr w19">
                <div class="ar">${chevUp}</div>
                <div class="th h18"></div>
                <div class="sp"></div>
                <div class="ar">${chev()}</div>
              </div>
            </div>
            <div class="pe-title">${dockTitle("属性编辑器")}</div>
            <div class="petools">
              <div class="fi"><span class="latin">Filter</span></div>
              <svg class="mplus" width="26" height="24" viewBox="0 0 26 24"><path d="M8.5 1.5H14.5V8.5H21.5V14.5H14.5V21.5H8.5V14.5H1.5V8.5H8.5Z" fill="#3fd02c" stroke="#1d8a14"/><path d="M21 21.5H26L23.5 24Z" fill="#222"/></svg>
              <svg class="mminus" width="24" height="8" viewBox="0 0 24 8"><rect x=".5" y=".5" width="22" height="6" fill="#d9d9d9" stroke="#aaa"/></svg>
              <svg class="mwrench" width="25" height="26" viewBox="0 0 25 26"><path d="M2 23L14 10" stroke="#888" stroke-width="4"/><path d="M2 23L14 10" stroke="#ddd" stroke-width="1.5"/><path d="M13 10C12 5 16 2 21 3L18 6L19 9L22 10L24 7C25 11 21 14 16 13Z" fill="#ccc" stroke="#777"/><path d="M20 23H25L22.5 25.5Z" fill="#222"/></svg>
            </div>
            <div class="peclass"><span class="latin">MainWindow : QMainWindow</span></div>
            <div class="ptable">
              <div class="cols">
                <div class="pr hdr"><span class="c1">属性</span><span class="c2">值</span></div>
                <div class="pr grp"><span class="c1"><span class="ch">${chev("#333")}</span>QObject</span><span></span></div>
                <div class="pr onm"><span class="c1 bold">objectName</span><span class="c2">MainWindow</span></div>
                <div class="pr grp"><span class="c1"><span class="ch">${chev("#333")}</span>QWidget</span><span></span></div>
                <div class="pr y1"><span class="c1">windowModality</span><span class="c2">NonModal</span></div>
                <div class="pr y2"><span class="c1">enabled</span><span class="c2"><span class="chk"><svg width="10" height="10" viewBox="0 0 10 10"><path d="M1 5L4 8.5L9.5 1.5" fill="none" stroke="#333"/></svg></span></span></div>
                <div class="pr y1"><span class="c1 bold"><span class="ch">${chev()}</span>geometry</span><span class="c2">[(0, 0), 691 x 258]</span></div>
                <div class="pr y2"><span class="c1 ind dim">X</span><span class="c2 dim">0</span></div>
                <div class="pr y3"><span class="c1 ind dim">Y</span><span class="c2 dim">0</span></div>
                <div class="pr y2"><span class="c1 ind">宽度</span><span class="c2">691</span></div>
              </div>
              <div class="scr w18">
                <div class="ar">${chevUp}</div>
                <div class="th h33"></div>
                <div class="sp"></div>
                <div class="ar">${chev()}</div>
              </div>
            </div>
            <div class="res-title">${dockTitle("资源浏览器")}</div>
            <div class="rtools">
              <svg width="24" height="24" viewBox="0 0 24 24"><path d="M2 22L5 14L18 2L22 6L9 19Z" fill="#f2b632" stroke="#a97a17"/><path d="M16 4L20 8L22 6L18 2Z" fill="#e8836a"/><path d="M2 22L5 14L9 19Z" fill="#f7e2b6"/></svg>
              <svg width="22" height="22" viewBox="0 0 22 22"><path d="M18 13A8 8 0 1 1 14 4" fill="none" stroke="#149a34" stroke-width="5"/><path d="M12 0L21 1V10Z" fill="#149a34"/></svg>
              <div class="fi"><span class="latin">Filter</span></div>
            </div>
            <div class="lists"><div>&lt;resource root&gt;</div><div></div></div>
            <div class="tabs">
              <span class="tab s">信号/槽编辑器</span>
              <span class="tab a">动作编辑器</span>
              <span class="tab on">资源浏览器</span>
            </div>
          </div>
        </div>
        <div class="strip"></div>
        <div class="taskbar">
          <span class="sl s48"><svg width="16" height="16" viewBox="0 0 16 16"><path d="M0 2.3L6.6 1.4V7.6H0ZM7.4 1.3L16 0V7.6H7.4ZM0 8.4H6.6V14.6L0 13.7ZM7.4 8.4H16V16L7.4 14.7Z" fill="#fff"/></svg></span>
          <span class="sl s48"><svg width="24" height="24" viewBox="0 0 24 24"><circle cx="14" cy="9" r="7" fill="none" stroke="#f36a0a" stroke-width="3.4"/><path d="M9 14L2.5 21" stroke="#f36a0a" stroke-width="3.6" stroke-linecap="round"/></svg></span>
          <span class="sl s44"><svg width="22" height="22" viewBox="0 0 22 22"><circle cx="11" cy="11" r="11" fill="#4caf50"/><path d="M11 0A11 11 0 0 1 20.5 5.5H11A5.5 5.5 0 0 0 6 8.5L2 4A11 11 0 0 1 11 0Z" fill="#e53935"/><path d="M20.5 5.5A11 11 0 0 1 11 22L16 14.5A5.5 5.5 0 0 0 16 8Z" fill="#fbc02d"/><circle cx="11" cy="11" r="5.4" fill="#fff"/><circle cx="11" cy="11" r="4.2" fill="#4285f4"/></svg></span>
          <span class="sl s47"><svg width="26" height="26" viewBox="0 0 26 26"><path d="M13 8V15L6 19M13 15L20 19" stroke="#111" stroke-width="1.6" fill="none"/><rect x="9.5" y="1.5" width="7" height="7" rx="1.5" fill="#eee" stroke="#111" stroke-width="1.5"/><rect x="9" y="8" width="8" height="2.5" fill="#222"/><rect x="1.5" y="14.5" width="7" height="7" rx="1.5" fill="#eee" stroke="#111" stroke-width="1.5"/><rect x="1" y="21" width="8" height="2.5" fill="#511"/><rect x="17.5" y="14.5" width="7" height="7" rx="1.5" fill="#eee" stroke="#111" stroke-width="1.5"/><rect x="17" y="21" width="8" height="2.5" fill="#511"/></svg></span>
          ${task.map(([i, t]) => html`<div class="ti">${i}<span>${t}</span></div>`)}
          <div class="ti act"><svg width="20" height="16" viewBox="0 0 20 16"><path d="M0 3L3 0H20V13L17 16H0Z" fill="#2fb344"/><text x="10" y="12" text-anchor="middle" font-size="11" font-weight="700" font-family="Liberation Sans" fill="#e8f7d8">D</text></svg><span>Qt 设计...</span></div>
          <div class="tray">
            <svg class="tv" width="12" height="7" viewBox="0 0 12 7"><path d="M.5 6.5L6 1L11.5 6.5" fill="none" stroke="#eee"/></svg>
            <svg class="t1" width="13" height="11" viewBox="0 0 13 11"><rect x="4.5" y="1.5" width="8" height="8" fill="none" stroke="#fff" stroke-width="1.6"/><path d="M1 1V9" stroke="#fff" stroke-width="1.6"/></svg>
            <svg class="t2" width="13" height="13" viewBox="0 0 13 13"><circle cx="6.5" cy="6.5" r="5.5" fill="none" stroke="#fff"/><path d="M1 6.5H12M6.5 1V12" stroke="#fff"/></svg>
            <svg class="t3" width="9" height="9" viewBox="0 0 9 9"><path d="M1 1L8 8M8 1L1 8" stroke="#fff"/></svg>
            <span class="ime">英</span>
            <svg class="t4" width="10" height="13" viewBox="0 0 10 13"><path d="M0 0H10V13H0ZM3.3 0V13M6.6 0V13M0 4.3H10M0 8.6H10" fill="none" stroke="#fff" stroke-width="1.1"/></svg>
            <span class="clock">0:44:51<br />2022/10/6</span>
            <svg class="t5" width="12" height="12" viewBox="0 0 12 12"><path d="M.5 .5H11.5V9.5H6L3.5 11.5V9.5H.5Z" fill="none" stroke="#fff"/></svg>
            <span class="mark">CSDN @魏纳海森堡的门徒</span>
          </div>
        </div>
      </div>
      <div class="tip">0</div>
    `;
  }
}
